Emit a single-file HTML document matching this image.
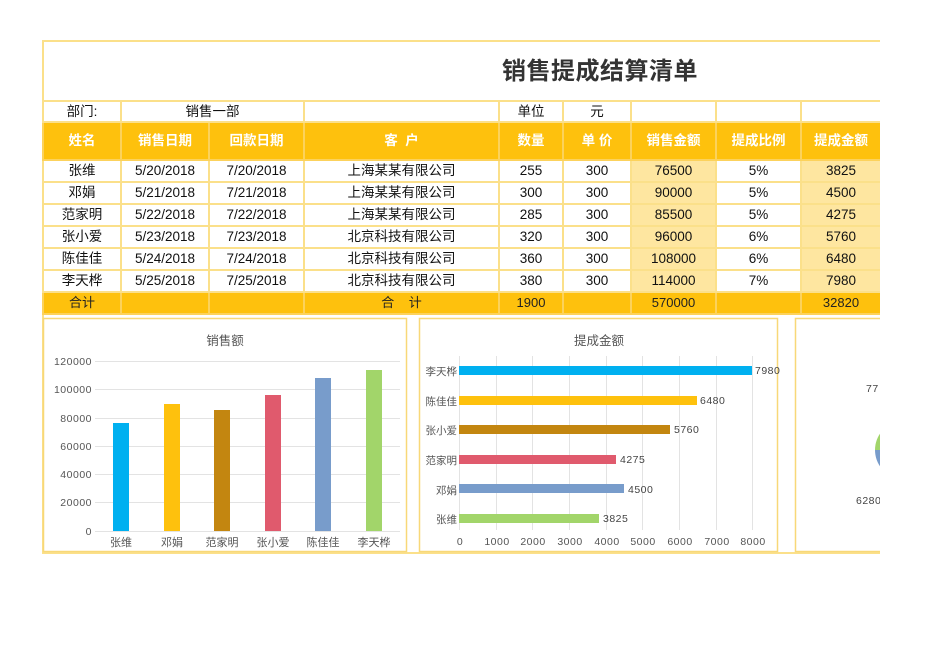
<!DOCTYPE html>
<html><head><meta charset="utf-8"><style>
body{margin:0;width:950px;height:672px;background:#fff;position:relative;overflow:hidden;font-family:"Liberation Sans","Noto Sans CJK SC",sans-serif;}
#frame{position:absolute;left:42px;top:40px;width:836px;height:510px;border:2px solid #fbe08a;border-right:none;}
#title{position:absolute;top:51px;text-align:center;font-size:24px;font-weight:bold;color:#333;letter-spacing:0.5px}
table{position:absolute;left:42px;top:100px;border-collapse:collapse;table-layout:fixed;width:838px;font-size:13.5px;color:#111}
td{border:2px solid #fbe08a;text-align:center;padding:0;height:20px;line-height:20px;white-space:nowrap;overflow:hidden}
tr.d td{height:19px;line-height:19px}
tr.h td{background:#fec10d;color:#fff;font-weight:bold;height:36px;border-color:#fcd25c}
tr.t td{background:#fec10d;color:#222;font-size:13px;border-color:#fcd25c}
td.p{background:#fee6a0}
svg text{font-family:"Liberation Sans","Noto Sans CJK SC",sans-serif}
</style></head><body>
<div id="frame"></div>
<div id="title" style="left:42px;width:1116px">销售提成结算清单</div>
<table>
<colgroup><col style="width:78px"><col style="width:88px"><col style="width:95px"><col style="width:195px"><col style="width:64px"><col style="width:68px"><col style="width:85px"><col style="width:85px"><col style="width:80px"></colgroup>
<tr class="d"><td>部门:</td><td colspan="2">销售一部</td><td></td><td>单位</td><td>元</td><td></td><td></td><td></td></tr>
<tr class="h"><td>姓名</td><td>销售日期</td><td>回款日期</td><td>客&nbsp;&nbsp;户</td><td>数量</td><td>单 价</td><td>销售金额</td><td>提成比例</td><td>提成金额</td></tr>
<tr><td>张维</td><td>5/20/2018</td><td>7/20/2018</td><td>上海某某有限公司</td><td>255</td><td>300</td><td class="p">76500</td><td>5%</td><td class="p">3825</td></tr>
<tr><td>邓娟</td><td>5/21/2018</td><td>7/21/2018</td><td>上海某某有限公司</td><td>300</td><td>300</td><td class="p">90000</td><td>5%</td><td class="p">4500</td></tr>
<tr><td>范家明</td><td>5/22/2018</td><td>7/22/2018</td><td>上海某某有限公司</td><td>285</td><td>300</td><td class="p">85500</td><td>5%</td><td class="p">4275</td></tr>
<tr><td>张小爱</td><td>5/23/2018</td><td>7/23/2018</td><td>北京科技有限公司</td><td>320</td><td>300</td><td class="p">96000</td><td>6%</td><td class="p">5760</td></tr>
<tr><td>陈佳佳</td><td>5/24/2018</td><td>7/24/2018</td><td>北京科技有限公司</td><td>360</td><td>300</td><td class="p">108000</td><td>6%</td><td class="p">6480</td></tr>
<tr><td>李天桦</td><td>5/25/2018</td><td>7/25/2018</td><td>北京科技有限公司</td><td>380</td><td>300</td><td class="p">114000</td><td>7%</td><td class="p">7980</td></tr>
<tr class="t"><td>合计</td><td></td><td></td><td>合&nbsp;&nbsp;&nbsp;&nbsp;计</td><td>1900</td><td></td><td>570000</td><td></td><td>32820</td></tr>
</table>

<svg style="position:absolute;left:0;top:0" width="950" height="672">
<rect x="43.5" y="318.5" width="363" height="233" fill="#fff" stroke="#f8d878" stroke-width="1.5"/>
<rect x="419.5" y="318.5" width="358" height="233" fill="#fff" stroke="#f8d878" stroke-width="1.5"/>
<rect x="795.5" y="318.5" width="90" height="233" fill="#fff" stroke="#f8d878" stroke-width="1.5"/>
<g font-size="12.5" fill="#555" text-anchor="middle"><text x="225" y="345">销售额</text><text x="599" y="345">提成金额</text></g>
<g stroke="#e3e3e3" stroke-width="1">
<line x1="95" y1="361.5" x2="400" y2="361.5"/><line x1="95" y1="389.5" x2="400" y2="389.5"/><line x1="95" y1="418.5" x2="400" y2="418.5"/><line x1="95" y1="446.5" x2="400" y2="446.5"/><line x1="95" y1="474.5" x2="400" y2="474.5"/><line x1="95" y1="502.5" x2="400" y2="502.5"/><line x1="95" y1="531.5" x2="400" y2="531.5"/>
</g>
<g font-size="10.5" fill="#555" text-anchor="end" letter-spacing="0.5">
<text x="92" y="365">120000</text><text x="92" y="393">100000</text><text x="92" y="422">80000</text><text x="92" y="450">60000</text><text x="92" y="478">40000</text><text x="92" y="506">20000</text><text x="92" y="535">0</text></g>
<rect x="113" y="423" width="16" height="108" fill="#00b0f0"/>
<rect x="164" y="404" width="16" height="127" fill="#fec10d"/>
<rect x="214" y="410" width="16" height="121" fill="#c38610"/>
<rect x="265" y="395" width="16" height="136" fill="#e05a6d"/>
<rect x="315" y="378" width="16" height="153" fill="#789ccb"/>
<rect x="366" y="370" width="16" height="161" fill="#a2d56a"/>
<g font-size="11" fill="#555" text-anchor="middle">
<text x="121" y="546">张维</text><text x="172" y="546">邓娟</text><text x="222" y="546">范家明</text><text x="273" y="546">张小爱</text><text x="323" y="546">陈佳佳</text><text x="374" y="546">李天桦</text></g>

<g stroke="#e3e3e3" stroke-width="1">
<line x1="459.5" y1="356" x2="459.5" y2="530"/><line x1="496.5" y1="356" x2="496.5" y2="530"/><line x1="532.5" y1="356" x2="532.5" y2="530"/><line x1="569.5" y1="356" x2="569.5" y2="530"/><line x1="606.5" y1="356" x2="606.5" y2="530"/><line x1="642.5" y1="356" x2="642.5" y2="530"/><line x1="679.5" y1="356" x2="679.5" y2="530"/><line x1="716.5" y1="356" x2="716.5" y2="530"/><line x1="752.5" y1="356" x2="752.5" y2="530"/></g>
<rect x="459" y="366" width="293" height="9" fill="#00b0f0"/>
<rect x="459" y="396" width="238" height="9" fill="#fec10d"/>
<rect x="459" y="425" width="211" height="9" fill="#c38610"/>
<rect x="459" y="455" width="157" height="9" fill="#e05a6d"/>
<rect x="459" y="484" width="165" height="9" fill="#789ccb"/>
<rect x="459" y="514" width="140" height="9" fill="#a2d56a"/>
<g font-size="10.5" fill="#444" letter-spacing="0.5">
<text x="755" y="374">7980</text><text x="700" y="404">6480</text><text x="674" y="433">5760</text><text x="620" y="463">4275</text><text x="628" y="493">4500</text><text x="603" y="522">3825</text></g>
<g font-size="10.5" fill="#555" text-anchor="end">
<text x="457" y="375">李天桦</text><text x="457" y="405">陈佳佳</text><text x="457" y="434">张小爱</text><text x="457" y="464">范家明</text><text x="457" y="494">邓娟</text><text x="457" y="523">张维</text></g>
<g font-size="10.5" fill="#555" text-anchor="middle" letter-spacing="0.5">
<text x="460" y="545">0</text><text x="497" y="545">1000</text><text x="533" y="545">2000</text><text x="570" y="545">3000</text><text x="607" y="545">4000</text><text x="643" y="545">5000</text><text x="680" y="545">6000</text><text x="717" y="545">7000</text><text x="753" y="545">8000</text></g>
<path d="M905 450 L875 450 A30 30 0 0 1 882 431 Z" fill="#a2d56a"/>
<path d="M905 450 L875 450 A30 30 0 0 0 882 469 Z" fill="#789ccb"/>
<g font-size="10.5" fill="#444" letter-spacing="0.5"><text x="866" y="392">77</text><text x="856" y="504">6280</text></g>
<rect x="880" y="0" width="70" height="672" fill="#fff"/>
</svg>
</body></html>
